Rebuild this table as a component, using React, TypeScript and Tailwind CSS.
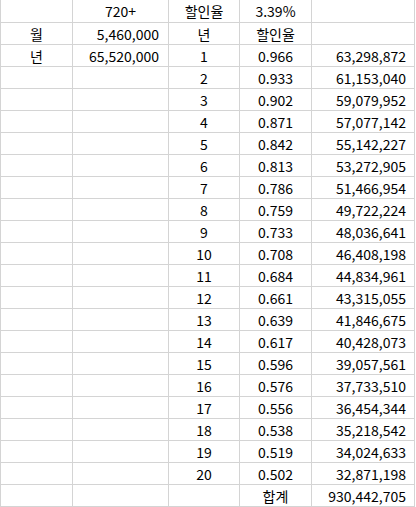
const rates: [string, string][] = [
  ["0.966", "63,298,872"],
  ["0.933", "61,153,040"],
  ["0.902", "59,079,952"],
  ["0.871", "57,077,142"],
  ["0.842", "55,142,227"],
  ["0.813", "53,272,905"],
  ["0.786", "51,466,954"],
  ["0.759", "49,722,224"],
  ["0.733", "48,036,641"],
  ["0.708", "46,408,198"],
  ["0.684", "44,834,961"],
  ["0.661", "43,315,055"],
  ["0.639", "41,846,675"],
  ["0.617", "40,428,073"],
  ["0.596", "39,057,561"],
  ["0.576", "37,733,510"],
  ["0.556", "36,454,344"],
  ["0.538", "35,218,542"],
  ["0.519", "34,024,633"],
  ["0.502", "32,871,198"],
];

type Row = [string, string, string, string, string];

const rows: Row[] = [
  ["", "720+", "할인율", "3.39%", ""],
  ["월", "5,460,000", "년", "할인율", ""],
  ...rates.map(([r, v], i): Row => [i === 0 ? "년" : "", i === 0 ? "65,520,000" : "", String(i + 1), r, v]),
  ["", "", "", "합계", "930,442,705"],
];

const cols = [
  "w-[73px] border-l justify-center",
  "w-[96px] justify-end pr-[9px]",
  "w-[71px] justify-center",
  "w-[72px] justify-center",
  "w-[103px] justify-end pr-[8px]",
];

export default function App() {
  return (
    <div className="w-[416px] h-[507px] bg-white text-black text-[14px] font-['Noto_Sans_CJK_KR',sans-serif] overflow-hidden">
      {rows.map((row, r) => (
        <div key={r} className={`flex ${r === 0 ? "h-[23px]" : "h-[22px]"}`}>
          {row.map((cell, c) => (
            <div
              key={c}
              className={`flex items-center border-r border-b border-[#d4d4d4] leading-none ${cols[c]} ${r === 0 && c === 1 ? "!justify-center !pr-0" : ""}`}
            >
              {cell}
            </div>
          ))}
        </div>
      ))}
    </div>
  );
}
